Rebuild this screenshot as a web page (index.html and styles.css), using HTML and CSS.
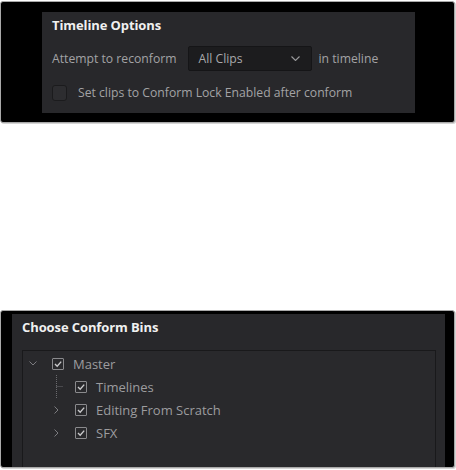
FILE: index.html
```html
<!DOCTYPE html>
<html>
<head>
<meta charset="utf-8">
<link rel="stylesheet" href="styles.css">
</head>
<body>
<div class="box box-top">
  <div class="panel panel-top">
    <div class="title">Timeline Options</div>
    <div class="row">
      <span class="label">Attempt to reconform</span>
      <div class="select">
        <span>All Clips</span>
        <svg class="select-chev" width="9" height="5" viewBox="0 0 9 5"><path d="M0.5 0.5 L4.5 4.5 L8.5 0.5" fill="none" stroke="#9a9a9c" stroke-width="1.1"/></svg>
      </div>
      <span class="label label-after">in timeline</span>
    </div>
    <div class="row check-row">
      <span class="checkbox-big"></span>
      <span class="label">Set clips to Conform Lock Enabled after conform</span>
    </div>
  </div>
</div>

<div class="box box-bottom">
  <div class="panel panel-bottom">
    <div class="title">Choose Conform Bins</div>
    <div class="tree">
      <div class="tree-row level0">
        <span class="twisty">
          <svg width="8" height="5" viewBox="0 0 8 5"><path d="M0.5 0.5 L4 4 L7.5 0.5" fill="none" stroke="#7c7c80" stroke-width="1"/></svg>
        </span>
        <span class="cb"><svg width="10" height="10" viewBox="0 0 10 10"><path d="M2 5 L4.2 7.2 L8.2 2.6" fill="none" stroke="#c9c9cb" stroke-width="1.4"/></svg></span>
        <span class="tree-label">Master</span>
      </div>
      <div class="tree-row level1">
        <span class="twisty">
          <svg width="16" height="23" viewBox="0 0 16 23"><path d="M8.5 0 V23 M8.5 11.5 H15" fill="none" stroke="#6a6a6e" stroke-width="1" stroke-dasharray="1 1"/></svg>
        </span>
        <span class="cb"><svg width="10" height="10" viewBox="0 0 10 10"><path d="M2 5 L4.2 7.2 L8.2 2.6" fill="none" stroke="#c9c9cb" stroke-width="1.4"/></svg></span>
        <span class="tree-label">Timelines</span>
      </div>
      <div class="tree-row level1">
        <span class="twisty">
          <svg width="5" height="8" viewBox="0 0 5 8"><path d="M0.5 0.5 L4 4 L0.5 7.5" fill="none" stroke="#7c7c80" stroke-width="1"/></svg>
        </span>
        <span class="cb"><svg width="10" height="10" viewBox="0 0 10 10"><path d="M2 5 L4.2 7.2 L8.2 2.6" fill="none" stroke="#c9c9cb" stroke-width="1.4"/></svg></span>
        <span class="tree-label">Editing From Scratch</span>
      </div>
      <div class="tree-row level1">
        <span class="twisty">
          <svg width="5" height="8" viewBox="0 0 5 8"><path d="M0.5 0.5 L4 4 L0.5 7.5" fill="none" stroke="#7c7c80" stroke-width="1"/></svg>
        </span>
        <span class="cb"><svg width="10" height="10" viewBox="0 0 10 10"><path d="M2 5 L4.2 7.2 L8.2 2.6" fill="none" stroke="#c9c9cb" stroke-width="1.4"/></svg></span>
        <span class="tree-label">SFX</span>
      </div>
    </div>
  </div>
</div>
</body>
</html>
```

FILE: styles.css
```css
* { box-sizing: border-box; }
html, body {
  margin: 0;
  padding: 0;
  background: #ffffff;
}
body {
  font-family: "Open Sans", "Liberation Sans", sans-serif;
  width: 456px;
  height: 470px;
  overflow: hidden;
}
.box {
  background: #000;
  border: 1px solid #a9a9a9;
  border-radius: 3px;
  width: 455px;
  box-shadow: 1px 1px 0 #d4d4d4;
}
.box-top {
  margin-top: 1px;
  padding: 10px 39px 9px 41px;
}
.box-bottom {
  margin-top: 187px;
  height: 158px;
  padding: 3px 9px 0 11px;
  overflow: hidden;
}
.panel {
  background: #28282b;
}
.panel-top {
  height: 101px;
  padding: 3px 10px 0 10px;
}
.panel-bottom {
  height: 160px;
  padding: 3px 9px 0 10px;
}
.title {
  color: #f0f0f0;
  font-weight: 700;
  font-size: 13px;
  line-height: 20px;
  letter-spacing: -0.1px;
}
.row {
  display: flex;
  align-items: center;
  margin-top: 11px;
}
.label {
  color: #a3a3a5;
  font-size: 12.2px;
  line-height: 18px;
}
.select {
  display: flex;
  align-items: center;
  justify-content: space-between;
  width: 124px;
  height: 25px;
  margin-left: 11px;
  padding: 0 11px 0 10px;
  background: #1c1c1e;
  border: 1px solid #151517;
  border-radius: 2px;
  color: #a9a9ab;
  font-size: 12.2px;
}
.select-chev { display: block; }
.label-after { margin-left: 7px; }
.check-row {
  margin-top: 13px;
}
.checkbox-big {
  width: 15px;
  height: 16px;
  margin-right: 11px;
  background: #2d2d30;
  border: 1px solid #1b1b1d;
  border-radius: 3px;
}
.tree {
  margin-top: 13px;
  height: 200px;
  border: 1px solid #19191b;
  background: #29292c;
  padding-top: 1px;
}
.tree-row {
  display: flex;
  align-items: center;
  height: 23px;
}
.level0 { padding-left: 2px; }
.level1 { padding-left: 25px; }
.twisty {
  width: 16px;
  height: 23px;
  display: flex;
  align-items: center;
  justify-content: center;
  margin-right: 11px;
}
.twisty svg { display: block; }
.cb {
  width: 12px;
  height: 12px;
  border: 1px solid #8a8a8d;
  border-radius: 1px;
  display: flex;
  align-items: center;
  justify-content: center;
  margin-right: 9px;
}
.cb svg { display: block; }
.tree-label {
  color: #9c9c9f;
  font-size: 13px;
  line-height: 18px;
}
```
